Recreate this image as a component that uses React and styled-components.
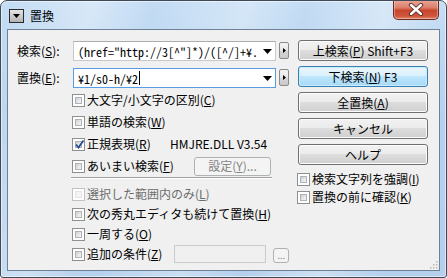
import React from 'react';
import styled, { createGlobalStyle, css } from 'styled-components';

const Global = createGlobalStyle`
  html, body { margin: 0; padding: 0; background: #ffffff; }
  body { font-family: "Noto Sans CJK JP", "Noto Sans", sans-serif; font-size: 12px; color: #000; }
  * { box-sizing: border-box; }
`;

const Window = styled.div`
  width: 447px;
  height: 278px;
  border: 1px solid #404a56;
  border-radius: 7px 7px 3px 3px;
  background:
    linear-gradient(104deg, rgba(255,255,255,0) 0%, rgba(255,255,255,0.35) 18%, rgba(255,255,255,0) 30%, rgba(255,255,255,0.3) 48%, rgba(255,255,255,0) 60%, rgba(255,255,255,0.35) 75%, rgba(255,255,255,0) 88%),
    linear-gradient(180deg, #c3dcf4 0%, #b6d2ee 40%, #b4d0ec 100%);
  display: flex;
  flex-direction: column;
  padding: 0 6px 6px 6px;
  overflow: hidden;
  box-shadow: inset 0 0 0 1px rgba(255,255,255,0.5);
`;

const TitleBar = styled.div`
  height: 28px;
  display: flex;
  align-items: flex-start;
`;

const SysIcon = styled.div`
  width: 15px;
  height: 14px;
  margin: 8px 0 0 2px;
  border: 1px solid #2b2b2b;
  background: linear-gradient(180deg, #e4e4e4, #b4b4b4);
  display: flex;
  align-items: center;
  justify-content: center;
`;

const Title = styled.div`
  margin: 6px 0 0 6px;
  font-size: 12px;
  line-height: 18px;
  color: #000;
  flex: 1;
`;

const CloseBtn = styled.div`
  width: 46px;
  height: 20px;
  margin-top: -1px;
  margin-right: 1px;
  border: 1px solid #6b2a1f;
  border-top: none;
  border-radius: 0 0 5px 5px;
  background: linear-gradient(180deg, #e9a99b 0%, #dc7e69 40%, #c7452b 55%, #d0573c 85%, #e2866f 100%);
  box-shadow: inset 0 0 0 1px rgba(255,255,255,0.35);
  display: flex;
  align-items: center;
  justify-content: center;
`;

const Client = styled.div`
  flex: 1;
  position: relative;
  border: 1px solid #6e8196;
  background: #f0f0f0;
  display: grid;
  grid-template-columns: 272px 130px;
  column-gap: 9px;
  padding: 10px 11px 0 9px;
  align-items: start;
`;

const LeftCol = styled.div`
  display: flex;
  flex-direction: column;
  padding-top: 1px;
`;

const FieldRow = styled.div`
  display: flex;
  align-items: center;
  height: 20px;
  margin-bottom: ${p => p.$mb || 0}px;
`;

const FieldLabel = styled.div`
  width: 56px;
  line-height: 14px;
  white-space: nowrap;
`;

const U = styled.span`
  text-decoration: underline;
  text-underline-offset: 1px;
`;

const Combo = styled.div`
  width: 203px;
  height: 20px;
  border: 1px solid ${p => (p.$focus ? '#569de5' : '#c5c9d0')};
  ${p => !p.$focus && css`border-top-color: #abadb3;`}
  background: #fff;
  display: flex;
  align-items: center;
  padding-left: 4px;
`;

const ComboText = styled.div`
  flex: 1;
  font-family: "Noto Sans Mono CJK JP", "Liberation Mono", monospace;
  font-size: 12px;
  white-space: nowrap;
  display: flex;
  align-items: center;
`;

const Caret = styled.span`
  display: inline-block;
  width: 1px;
  height: 14px;
  background: #000;
  margin-left: 1px;
`;

const DropArrow = styled.div`
  width: 16px;
  height: 100%;
  display: flex;
  align-items: center;
  justify-content: center;
  flex-shrink: 0;
`;

const SideBtn = styled.div`
  width: 10px;
  height: 17px;
  margin-left: 3px;
  margin-top: -2px;
  border: 1px solid #8a8a8a;
  border-radius: 2px;
  background: linear-gradient(180deg, #f4f4f4 0%, #e6e6e6 50%, #d6d6d6 51%, #cacaca 100%);
  display: flex;
  align-items: center;
  justify-content: center;
`;

const Options = styled.div`
  margin-left: 55px;
  display: flex;
  flex-direction: column;
`;

const OptRow = styled.div`
  display: flex;
  align-items: center;
  height: ${p => p.$h || 22}px;
`;

const BoxOuter = styled.div`
  width: 13px;
  height: 13px;
  flex-shrink: 0;
  border: 1px solid ${p => (p.$disabled ? '#c2c2c2' : '#8e8f8f')};
  background: #fff;
  padding: 2px;
  position: relative;
`;

const BoxInner = styled.div`
  width: 100%;
  height: 100%;
  background: ${p => (p.$disabled ? '#f4f4f4' : 'linear-gradient(135deg, #cbcfd5 0%, #e9e9e9 60%, #f6f6f6 100%)')};
  border: 1px solid ${p => (p.$disabled ? '#e6e6e6' : '#aeb3b9')};
`;

const CheckMark = styled.svg`
  position: absolute;
  left: 1px;
  top: 0px;
`;

const OptText = styled.div`
  margin-left: 2px;
  white-space: nowrap;
  line-height: 14px;
  width: ${p => (p.$w ? `${p.$w}px` : 'auto')};
  color: ${p => (p.$disabled ? '#6d6d6d' : '#000')};
`;

const DllText = styled.div`
  white-space: nowrap;
  line-height: 14px;
`;

const Separator = styled.div`
  width: 201px;
  height: 2px;
  margin: 0 0 5px -1px;
  border-top: 1px solid #a0a0a0;
  border-bottom: 1px solid #ffffff;
`;

const PushBtn = styled.div`
  height: ${p => p.$h || 21}px;
  width: ${p => (p.$w ? `${p.$w}px` : '100%')};
  border: 1px solid #707070;
  border-radius: 3px;
  background: linear-gradient(180deg, #f2f2f2 0%, #ebebeb 49%, #dddddd 50%, #cfcfcf 100%);
  box-shadow: inset 0 0 0 1px #fcfcfc;
  display: flex;
  align-items: center;
  justify-content: center;
  white-space: nowrap;
  line-height: 14px;
  ${p => p.$default && css`
    border-color: #3c7fb1;
    background: linear-gradient(180deg, #eaf6fd 0%, #d9f0fc 49%, #bee6fd 50%, #a7d9f5 100%);
    box-shadow: inset 0 0 0 1px #c7ecfd;
  `}
  ${p => p.$disabled && css`
    border-color: #adb2b5;
    background: #f4f4f4;
    box-shadow: none;
    color: #838383;
  `}
`;

const RightCol = styled.div`
  display: flex;
  flex-direction: column;
  gap: 5px;
`;

const RightOpts = styled.div`
  display: flex;
  flex-direction: column;
  margin-top: 0px;
  margin-left: -1px;
`;

const TextBox = styled.div`
  width: 95px;
  height: 18px;
  border: 1px solid #c9cbce;
  background: #f0f0f0;
`;

const SmallBtn = styled.div`
  width: 16px;
  height: 15px;
  margin-left: 7px;
  margin-top: 2px;
  border: 1px solid #adb2b5;
  border-radius: 3px;
  background: #f4f4f4;
  color: #838383;
  font-size: 9px;
  line-height: 9px;
  display: flex;
  align-items: flex-end;
  justify-content: center;
  padding-bottom: 2px;
`;

const Grip = styled.svg`
  position: absolute;
  right: 1px;
  bottom: 1px;
`;

function Check({ checked, disabled }) {
  return (
    <BoxOuter $disabled={disabled}>
      <BoxInner $disabled={disabled} />
      {checked && (
        <CheckMark width="11" height="11" viewBox="0 0 11 11">
          <path d="M2 5.5 L4.5 8.5 L9.5 1.5" stroke="#2a4d8c" strokeWidth="1.8" fill="none" />
        </CheckMark>
      )}
    </BoxOuter>
  );
}

function Option({ checked, disabled, h, w, children, extra }) {
  return (
    <OptRow $h={h}>
      <Check checked={checked} disabled={disabled} />
      <OptText $w={w} $disabled={disabled}>{children}</OptText>
      {extra}
    </OptRow>
  );
}

const Tri = ({ dir = 'down' }) =>
  dir === 'down' ? (
    <svg width="9" height="5" viewBox="0 0 9 5"><path d="M0 0 H9 L4.5 5 Z" fill="#000" /></svg>
  ) : (
    <svg width="3" height="5" viewBox="0 0 3 5"><path d="M0 0 L3 2.5 L0 5 Z" fill="#000" /></svg>
  );

export default function App() {
  return (
    <>
      <Global />
      <Window>
        <TitleBar>
          <SysIcon>
            <svg width="7" height="4" viewBox="0 0 7 4"><path d="M0 0 H7 L3.5 4 Z" fill="#000" /></svg>
          </SysIcon>
          <Title>置換</Title>
          <CloseBtn>
            <svg width="16" height="13" viewBox="0 0 16 13">
              <path d="M3 2 L13 11 M13 2 L3 11" stroke="#5a2a22" strokeWidth="4.2" strokeLinecap="round" />
              <path d="M3 2 L13 11 M13 2 L3 11" stroke="#ffffff" strokeWidth="2.4" strokeLinecap="round" />
            </svg>
          </CloseBtn>
        </TitleBar>
        <Client>
          <LeftCol>
            <FieldRow $mb={7}>
              <FieldLabel>検索(<U>S</U>):</FieldLabel>
              <Combo>
                <ComboText>(href="http://3[^"]*)/([^/]+¥.</ComboText>
                <DropArrow><Tri /></DropArrow>
              </Combo>
              <SideBtn><Tri dir="right" /></SideBtn>
            </FieldRow>
            <FieldRow>
              <FieldLabel>置換(<U>E</U>):</FieldLabel>
              <Combo $focus>
                <ComboText>¥1/s0-h/¥2<Caret /></ComboText>
                <DropArrow><Tri /></DropArrow>
              </Combo>
              <SideBtn><Tri dir="right" /></SideBtn>
            </FieldRow>
            <Options>
              <OptRow $h={1} />
              <Option>大文字/小文字の区別(<U>C</U>)</Option>
              <Option>単語の検索(<U>W</U>)</Option>
              <Option checked w={83} extra={<DllText>HMJRE.DLL V3.54</DllText>}>正規表現(<U>R</U>)</Option>
              <Option w={107} extra={<PushBtn $disabled $w={77} $h={19}>設定(<U>Y</U>)...</PushBtn>}>あいまい検索(<U>F</U>)</Option>
              <Separator />
              <Option disabled h={20}>選択した範囲内のみ(<U>L</U>)</Option>
              <Option h={20}>次の秀丸エディタも続けて置換(<U>H</U>)</Option>
              <Option h={20}>一周する(<U>O</U>)</Option>
              <Option h={20} w={89} extra={<><TextBox /><SmallBtn>...</SmallBtn></>}>追加の条件(<U>Z</U>)</Option>
            </Options>
          </LeftCol>
          <RightCol>
            <PushBtn>上検索(<U>P</U>) Shift+F3</PushBtn>
            <PushBtn $default>下検索(<U>N</U>) F3</PushBtn>
            <PushBtn>全置換(<U>A</U>)</PushBtn>
            <PushBtn>キャンセル</PushBtn>
            <PushBtn>ヘルプ</PushBtn>
            <RightOpts>
              <Option h={18}>検索文字列を強調(<U>I</U>)</Option>
              <Option h={18}>置換の前に確認(<U>K</U>)</Option>
            </RightOpts>
          </RightCol>
          <Grip width="10" height="10" viewBox="0 0 10 10">
            {[[8,2],[8,5],[5,5],[8,8],[5,8],[2,8]].map(([x,y],i)=>(
              <rect key={i} x={x} y={y} width="1.5" height="1.5" fill="#b8b8b8" />
            ))}
          </Grip>
        </Client>
      </Window>
    </>
  );
}
